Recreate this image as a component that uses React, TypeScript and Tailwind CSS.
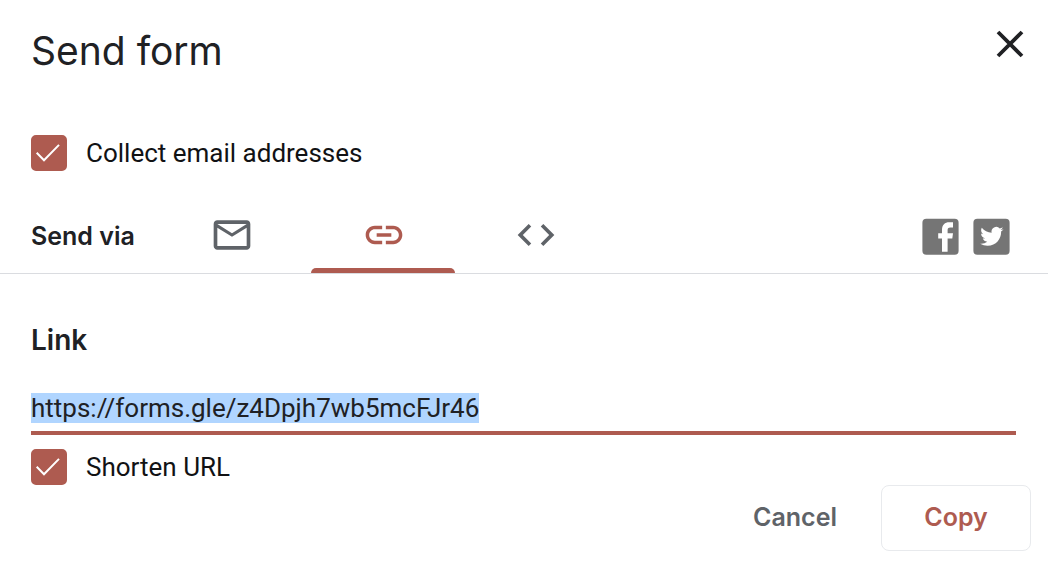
import { useEffect, useRef, useState } from "react";
import type { ReactNode } from "react";

type CheckboxProps = { id: string; label: string };

function Checkbox({ id, label }: CheckboxProps) {
  const [checked, setChecked] = useState(true);
  return (
    <div className="flex items-center gap-[19px]">
      <span className="grid size-9 shrink-0">
        <input
          id={id}
          type="checkbox"
          checked={checked}
          onChange={(e) => setChecked(e.target.checked)}
          className="col-start-1 row-start-1 size-9 appearance-none rounded-[5px] border-2 border-[#5f6368] checked:border-[#ae5b50] checked:bg-[#ae5b50]"
        />
        {checked && (
          <svg
            viewBox="0 0 36 36"
            aria-hidden="true"
            className="pointer-events-none col-start-1 row-start-1 size-9 fill-none stroke-white stroke-2"
          >
            <path d="M5.7 17.8 13 25.2 28 9.9" />
          </svg>
        )}
      </span>
      <label htmlFor={id} className="text-[26px] leading-9 text-[#111214]">
        {label}
      </label>
    </div>
  );
}

type TabName = "email" | "link" | "embed";

const tabs: { name: TabName; label: string; icon: ReactNode }[] = [
  {
    name: "email",
    label: "Email",
    icon: (
      <path d="M22 6c0-1.1-.9-2-2-2H4c-1.1 0-2 .9-2 2v12c0 1.1.9 2 2 2h16c1.1 0 2-.9 2-2V6zm-2 0-8 5-8-5h16zm0 12H4V8l8 5 8-5v10z" />
    ),
  },
  {
    name: "link",
    label: "Link",
    icon: (
      <path d="M3.9 12c0-1.71 1.39-3.1 3.1-3.1h4V7H7c-2.76 0-5 2.24-5 5s2.24 5 5 5h4v-1.9H7c-1.71 0-3.1-1.39-3.1-3.1zM8 13h8v-2H8v2zm9-6h-4v1.9h4c1.71 0 3.1 1.39 3.1 3.1s-1.39 3.1-3.1 3.1h-4V17h4c2.76 0 5-2.24 5-5s-2.24-5-5-5z" />
    ),
  },
  {
    name: "embed",
    label: "Embed HTML",
    icon: (
      <path d="M9.4 16.6 4.8 12l4.6-4.6L8 6l-6 6 6 6 1.4-1.4zm5.2 0 4.6-4.6-4.6-4.6L16 6l6 6-6 6-1.4-1.4z" />
    ),
  },
];

function ShareButton({ label, children }: { label: string; children: ReactNode }) {
  return (
    <button type="button" aria-label={label}>
      <svg viewBox="0 0 37 37" aria-hidden="true" className="size-[37px]">
        <rect x="0.4" y="0.8" width="36.200" height="36" rx="4" fill="#757575" />
        {children}
      </svg>
    </button>
  );
}

export default function App() {
  const [active, setActive] = useState<TabName>("link");
  const urlRef = useRef<HTMLInputElement>(null);

  useEffect(() => {
    urlRef.current?.focus();
    urlRef.current?.select();
  }, []);

  return (
    <main className="bg-white font-['Roboto',sans-serif] text-[#202124]">
      <header className="flex items-start justify-between pt-6 pr-4 pl-[31px]">
        <h1 className="pt-px font-['Inter',sans-serif] text-[39px] leading-[52px]">Send form</h1>
        <button type="button" aria-label="Close" className="-mt-1 text-[#202124]">
          <svg viewBox="0 0 44 44" aria-hidden="true" className="size-11 fill-none stroke-current stroke-[3.8]">
            <path d="M10 12 34 36M34 12 10 36" />
          </svg>
        </button>
      </header>

      <div className="px-[31px] pt-[58px]">
        <Checkbox id="collect" label="Collect email addresses" />
      </div>

      <div className="mt-[25px] flex h-[78px] border-b border-[#dadce0] pr-[38px] pl-[31px]">
        <h2 className="w-32 pt-[22px] font-['Inter',sans-serif] text-[25px] leading-9 font-semibold whitespace-nowrap">
          Send via
        </h2>
        <div role="tablist" aria-label="Send via" className="flex gap-2">
          {tabs.map((tab) => (
            <button
              key={tab.name}
              type="button"
              role="tab"
              aria-label={tab.label}
              aria-selected={active === tab.name}
              onClick={() => setActive(tab.name)}
              className="flex w-36 flex-col items-center justify-between pt-[17px] text-[#5f6368] aria-selected:text-[#ae5b50]"
            >
              <span className="pl-[2px]">
                <svg viewBox="0 0 24 24" aria-hidden="true" className="size-11 fill-current">
                  {tab.icon}
                </svg>
              </span>
              {active === tab.name && <span className="h-[5px] w-full rounded-t-[5px] bg-[#ae5b50]" />}
            </button>
          ))}
        </div>
        <div className="ml-auto flex items-start gap-[14px] pt-[22px]">
          <ShareButton label="Share on Facebook">
            <path
              fill="#fff"
              d="M20 33.8V20.500h-3.800v-5.200H20v-3.600C20 6.800 22.900 4.200 27.200 4.200H31v5.400h-2.700c-2.100 0-2.700.9-2.700 2.600v3.100H31l-.7 5.200h-4.700v13.300z"
            />
          </ShareButton>
          <ShareButton label="Share on Twitter">
            <path
              fill="#fff"
              transform="translate(7.200 6.700) scale(.97)"
              d="M23.953 4.57a10 10 0 0 1-2.825.775 4.958 4.958 0 0 0 2.163-2.723c-.951.555-2.005.959-3.127 1.184a4.92 4.92 0 0 0-8.384 4.482C7.69 8.095 4.067 6.13 1.64 3.162a4.822 4.822 0 0 0-.666 2.475c0 1.71.87 3.213 2.188 4.096a4.904 4.904 0 0 1-2.228-.616v.06a4.923 4.923 0 0 0 3.946 4.827 4.996 4.996 0 0 1-2.212.085 4.936 4.936 0 0 0 4.604 3.417 9.867 9.867 0 0 1-6.102 2.105c-.39 0-.779-.023-1.17-.067a13.995 13.995 0 0 0 7.557 2.209c9.053 0 13.998-7.496 13.998-13.985 0-.21 0-.42-.015-.63A9.935 9.935 0 0 0 24 4.59z"
            />
          </ShareButton>
        </div>
      </div>

      <section className="pt-12 pr-8 pl-[31px]">
        <label htmlFor="url" className="block font-['Inter',sans-serif] text-[28px] leading-9 font-semibold">
          Link
        </label>
        <input
          id="url"
          ref={urlRef}
          type="text"
          readOnly
          defaultValue="https://forms.gle/z4Dpjh7wb5mcFJr46"
          className="mt-8 mb-[14px] block h-[45px] w-full border-b-4 border-[#ae5b50] pb-[6px] text-[26px] outline-none selection:bg-[#b0d5ff] selection:text-[#202124]"
        />
        <Checkbox id="shorten" label="Shorten URL" />
      </section>

      <footer className="flex justify-end gap-3 pr-[17px] pb-5 font-['Inter',sans-serif] text-[25px] leading-8 font-semibold">
        <button type="button" className="h-[66px] px-8 pb-[2px] text-[#5f6368]">
          Cancel
        </button>
        <button
          type="button"
          className="h-[66px] w-[150px] rounded-lg border border-[#e8eaed] pb-[2px] text-[#ae5b50]"
        >
          Copy
        </button>
      </footer>
    </main>
  );
}
